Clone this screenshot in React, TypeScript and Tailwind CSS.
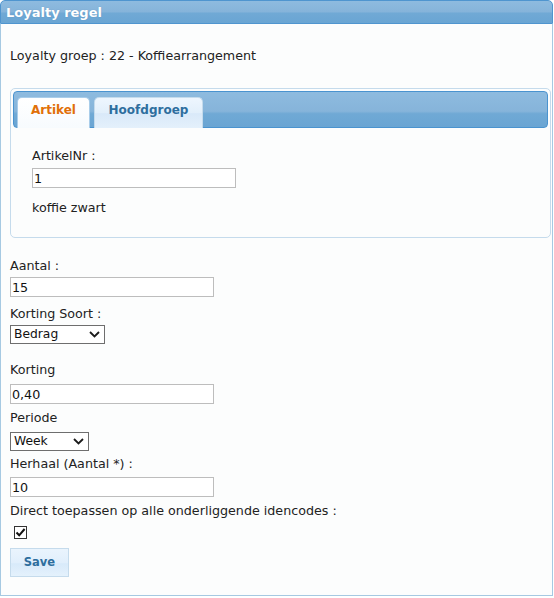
import React from "react";

const FONT = "font-['DejaVu_Sans',Verdana,sans-serif]";

function Chevron() {
  return (
    <svg width="11" height="7" viewBox="0 0 11 7" className="shrink-0">
      <path d="M1 1 L5.5 5.5 L10 1" fill="none" stroke="#1b1b1b" strokeWidth="1.8" />
    </svg>
  );
}

function TextField({ value, className = "" }: { value: string; className?: string }) {
  return (
    <input
      readOnly
      value={value}
      className={`block w-[204px] h-[20px] border border-[#bdbdbd] bg-white pl-[1px] text-[12.7px] text-[#111] outline-none ${FONT} ${className}`}
    />
  );
}

function SelectBox({ value, width }: { value: string; width: string }) {
  return (
    <div
      className={`${width} h-[19px] border border-[#6e6e6e] bg-white flex items-center justify-between pl-[3px] pr-[4px] text-[12.3px] text-[#111]`}
    >
      <span className="leading-[15px]">{value}</span>
      <Chevron />
    </div>
  );
}

function Label({ children, className = "" }: { children: React.ReactNode; className?: string }) {
  return <div className={`leading-[15px] ${className}`}>{children}</div>;
}

export default function App() {
  return (
    <div className={`w-[553px] h-[596px] flex flex-col ${FONT} text-[12.7px] text-[#222]`}>
      {/* widget title bar */}
      <div className="h-[24px] shrink-0 rounded-t-[5px] border border-[#4f95cf] bg-[linear-gradient(180deg,#8ebbdf_0%,#86b4da_48%,#70a9d5_56%,#6aa5d3_100%)] flex items-center pl-[5px]">
        <span className="text-white font-bold text-[13px] leading-[15px] [text-shadow:0_0_1px_rgba(40,90,140,0.35)]">
          Loyalty regel
        </span>
      </div>

      {/* widget content */}
      <div className="flex-1 border-x border-b border-[#a6c9e2] bg-[#fcfdfd] pl-[9px] pr-px">
        <Label className="mt-[24px]">Loyalty groep : 22 - Koffiearrangement</Label>

        {/* tabs */}
        <div className="mt-[25px] border border-[#c5dbec] rounded-[5px] p-[2px] bg-[#fcfdfd]">
          <div className="h-[37px] rounded-[4px] border border-[#4a93cf] bg-[linear-gradient(180deg,#8ebbdf_0%,#86b4da_55%,#70a9d5_62%,#6aa5d3_100%)] flex items-end gap-[4px] pl-[3px]">
            <div className="w-[73px] h-[31px] -mb-px rounded-t-[5px] border border-b-0 border-[#a9cdea] bg-[linear-gradient(180deg,#ffffff_0%,#f7fbfe_100%)] flex justify-center pt-[5px]">
              <span className="font-bold text-[12px] leading-[15px] text-[#e17009]">Artikel</span>
            </div>
            <div className="w-[109px] h-[31px] -mb-px rounded-t-[5px] border border-b-0 border-[#c5dbec] bg-[linear-gradient(180deg,#eef6fe_0%,#e2effb_50%,#d9e9f9_52%,#e4f0fb_100%)] flex justify-center pt-[5px]">
              <span className="font-bold text-[12px] leading-[15px] text-[#2e6e9e]">Hoofdgroep</span>
            </div>
          </div>
          <div className="pl-[19px] pt-[20px] pb-[20px]">
            <Label>ArtikelNr :</Label>
            <TextField value="1" className="mt-[5px]" />
            <Label className="mt-[12px]">koffie zwart</Label>
          </div>
        </div>

        {/* form fields */}
        <Label className="mt-[20px]">Aantal :</Label>
        <TextField value="15" className="mt-[4px]" />

        <Label className="mt-[9px]">Korting Soort :</Label>
        <div className="mt-[4px]">
          <SelectBox value="Bedrag" width="w-[95px]" />
        </div>

        <Label className="mt-[18px]">Korting</Label>
        <TextField value="0,40" className="mt-[7px]" />

        <Label className="mt-[6px]">Periode</Label>
        <div className="mt-[7px]">
          <SelectBox value="Week" width="w-[79px]" />
        </div>

        <Label className="mt-[5px]">Herhaal (Aantal *) :</Label>
        <TextField value="10" className="mt-[6px]" />

        <Label className="mt-[6px]">Direct toepassen op alle onderliggende idencodes :</Label>
        <div className="mt-[8px] ml-[4px] w-[13px] h-[13px] border border-[#333] bg-white flex items-center justify-center">
          <svg width="11" height="11" viewBox="0 0 11 11">
            <path d="M1.5 5.5 L4.2 8.3 L9.6 2" fill="none" stroke="#111" strokeWidth="2" />
          </svg>
        </div>

        <button
          type="button"
          className={`mt-[9px] w-[59px] h-[29px] border border-[#c5dbec] bg-[linear-gradient(180deg,#eaf4fd_0%,#e1effc_50%,#d8eafa_55%,#e4f1fc_100%)] text-[#2e6e9e] font-bold text-[11.5px] ${FONT}`}
        >
          Save
        </button>
      </div>
    </div>
  );
}
